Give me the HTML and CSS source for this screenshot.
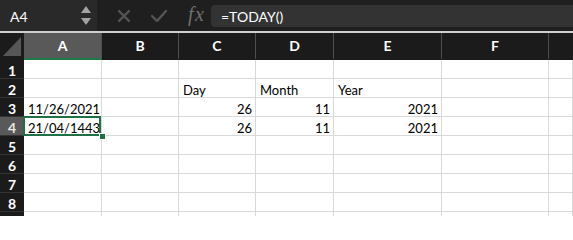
FILE: index.html
```html
<!DOCTYPE html>
<html>
<head>
<meta charset="utf-8">
<link rel="stylesheet" href="styles.css">
</head>
<body>
<div class="toolbar">
  <div class="namebox">
    <span class="name">A4</span>
    <svg class="stepper" width="12" height="22" viewBox="0 0 12 22">
      <path d="M6 1 L11 8 L1 8 Z" fill="#a3a3a3"/>
      <path d="M1 13 L11 13 L6 20 Z" fill="#a3a3a3"/>
    </svg>
  </div>
  <div class="actions">
    <svg class="ico" width="14" height="14" viewBox="0 0 14 14">
      <path d="M2 2 L12 12 M12 2 L2 12" stroke="#555" stroke-width="2.4" stroke-linecap="round"/>
    </svg>
    <svg class="ico" width="18" height="14" viewBox="0 0 18 14">
      <path d="M2 7 L7 12 L16 2" stroke="#555" stroke-width="2.4" fill="none" stroke-linecap="round" stroke-linejoin="round"/>
    </svg>
    <span class="fx">fx</span>
  </div>
  <div class="formula">=TODAY()</div>
</div>
<div class="sep"></div>
<div class="grid">
  <div class="corner"><svg width="24" height="25" viewBox="0 0 24 25"><path d="M3 23 L21 4 L21 23 Z" fill="#575757"/></svg></div>
  <div class="ch sel">A</div>
  <div class="ch">B</div>
  <div class="ch">C</div>
  <div class="ch">D</div>
  <div class="ch">E</div>
  <div class="ch">F</div>
  <div class="ch last"></div>

  <div class="rh">1</div>
  <div class="c"></div><div class="c"></div><div class="c"></div><div class="c"></div><div class="c"></div><div class="c"></div><div class="c"></div>

  <div class="rh">2</div>
  <div class="c"></div><div class="c"></div><div class="c">Day</div><div class="c">Month</div><div class="c">Year</div><div class="c"></div><div class="c"></div>

  <div class="rh">3</div>
  <div class="c">11/26/2021</div><div class="c"></div><div class="c num">26</div><div class="c num">11</div><div class="c num">2021</div><div class="c"></div><div class="c"></div>

  <div class="rh rsel">4</div>
  <div class="c active">21/04/1443<span class="frame"></span><span class="handle"></span></div><div class="c"></div><div class="c num">26</div><div class="c num">11</div><div class="c num">2021</div><div class="c"></div><div class="c"></div>

  <div class="rh">5</div>
  <div class="c"></div><div class="c"></div><div class="c"></div><div class="c"></div><div class="c"></div><div class="c"></div><div class="c"></div>

  <div class="rh">6</div>
  <div class="c"></div><div class="c"></div><div class="c"></div><div class="c"></div><div class="c"></div><div class="c"></div><div class="c"></div>

  <div class="rh">7</div>
  <div class="c"></div><div class="c"></div><div class="c"></div><div class="c"></div><div class="c"></div><div class="c"></div><div class="c"></div>

  <div class="rh">8</div>
  <div class="c"></div><div class="c"></div><div class="c"></div><div class="c"></div><div class="c"></div><div class="c"></div><div class="c"></div>

  <div class="rh">9</div>
  <div class="c"></div><div class="c"></div><div class="c"></div><div class="c"></div><div class="c"></div><div class="c"></div><div class="c"></div>
</div>
</body>
</html>
```

FILE: styles.css
```css
* { box-sizing: border-box; }
html, body {
  margin: 0;
  padding: 0;
  background: #ffffff;
  overflow: hidden;
  width: 573px;
  height: 216px;
}
body {
  font-family: Lato, "Liberation Sans", sans-serif;
}
.toolbar {
  height: 31px;
  background: #1f1f1f;
  display: flex;
  align-items: stretch;
}
.namebox {
  width: 97px;
  background: #292929;
  display: flex;
  align-items: center;
  justify-content: space-between;
  padding: 0 4px 0 10px;
}
.name {
  color: #ffffff;
  font-size: 14px;
  padding-top: 1px;
}
.stepper { display: block; margin-right: 1px; }
.actions {
  width: 114px;
  display: flex;
  align-items: center;
  padding-left: 20px;
}
.ico { display: block; }
.ico + .ico { margin-left: 19px; }
.fx {
  font-family: "Liberation Serif", serif;
  font-style: italic;
  font-size: 20px;
  color: #6f6f6f;
  margin-left: 20px;
  margin-top: -2px;
  letter-spacing: 1.5px;
}
.formula {
  flex: 1;
  margin: 5px -4px 4px 0;
  background: #333333;
  border-radius: 4px;
  color: #ffffff;
  font-size: 14px;
  display: flex;
  align-items: center;
  padding-left: 10px;
  padding-top: 1px;
}
.sep {
  height: 2px;
  background: #cfcfcf;
}
.grid {
  display: grid;
  grid-template-columns: 24px 78px 77px 77px 78px 108px 107px 1fr;
  grid-template-rows: 27px repeat(9, 19px);
}
.corner {
  background: #1b1b1b;
  border-bottom: 2px solid #1b1b1b;
}
.corner svg { display: block; }
.ch {
  background: #1b1b1b;
  color: #ffffff;
  font-weight: 700;
  font-size: 14px;
  display: flex;
  align-items: center;
  justify-content: center;
  border-right: 1px solid #4e4e4e;
  border-bottom: 2px solid #1b1b1b;
}
.ch.sel {
  background: #595959;
  border-bottom-color: #1e7a47;
}
.ch.last { border-right: none; }
.rh {
  background: #1b1b1b;
  color: #ffffff;
  font-weight: 700;
  font-size: 14px;
  line-height: 14px;
  display: flex;
  align-items: flex-end;
  justify-content: center;
  border-bottom: 1px solid #333333;
}
.rh.rsel {
  background: #595959;
  color: #e6e6e6;
}
.c {
  position: relative;
  background: #ffffff;
  color: #000000;
  font-size: 13px;
  line-height: 14px;
  display: flex;
  align-items: flex-end;
  padding: 0 3px 0 4px;
  border-right: 1px solid #d9d9d9;
  border-bottom: 1px solid #d9d9d9;
  white-space: nowrap;
}
.c.num { justify-content: flex-end; }
.c.active { z-index: 2; }
.frame {
  position: absolute;
  left: -1px;
  top: -1px;
  width: 78px;
  height: 20px;
  border: 2px solid #1e7145;
}
.handle {
  position: absolute;
  left: 75px;
  top: 16px;
  width: 7px;
  height: 7px;
  background: #1e7145;
  border: 1px solid #ffffff;
}
```
